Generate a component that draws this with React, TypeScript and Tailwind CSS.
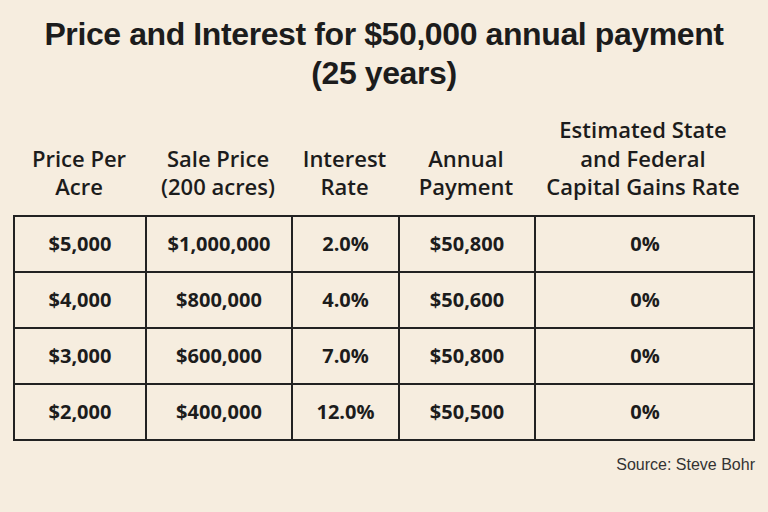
const rows = [
  ["$5,000", "$1,000,000", "2.0%", "$50,800", "0%"],
  ["$4,000", "$800,000", "4.0%", "$50,600", "0%"],
  ["$3,000", "$600,000", "7.0%", "$50,800", "0%"],
  ["$2,000", "$400,000", "12.0%", "$50,500", "0%"],
];

const headers = [
  ["Price Per", "Acre"],
  ["Sale Price", "(200 acres)"],
  ["Interest", "Rate"],
  ["Annual", "Payment"],
  ["Estimated State", "and Federal", "Capital Gains Rate"],
];

const cols = "grid-cols-[132px_146px_107px_136px_218px]";

export default function App() {
  return (
    <div className="h-[512px] w-[768px] overflow-hidden bg-[#f6eddf] text-[#1c1c1c]">
      <h1 className="pt-[15px] text-center font-['Liberation_Sans',Arial,sans-serif] text-[32px] font-bold leading-[39px] tracking-[-0.4px] whitespace-nowrap">
        Price and Interest for $50,000 annual payment
        <br />
        (25 years)
      </h1>

      <div className="mx-[13px] mt-[22px]">
        <div className={`grid ${cols} items-end font-['Open_Sans',sans-serif] text-[22px] font-semibold leading-[28.5px]`}>
          {headers.map((h, i) => (
            <div key={i} className="text-center">
              {h.map((line) => (
                <div key={line}>{line}</div>
              ))}
            </div>
          ))}
        </div>

        <div className="mt-[14px] border-2 border-[#222]">
          {rows.map((r, i) => (
            <div
              key={i}
              className={`grid ${cols} ${i < rows.length - 1 ? "h-[56px] border-b-2 border-[#222]" : "h-[54px]"}`}
            >
              {r.map((c, j) => (
                <div
                  key={j}
                  className={`flex items-center justify-center font-['Open_Sans',sans-serif] text-[20px] font-bold ${j < 4 ? "border-r-2 border-[#222]" : ""}`}
                >
                  {c}
                </div>
              ))}
            </div>
          ))}
        </div>

        <div className="mt-[14px] text-right font-['Liberation_Sans',Arial,sans-serif] text-[16px] leading-[20px] text-[#333]">
          Source: Steve Bohr
        </div>
      </div>
    </div>
  );
}
